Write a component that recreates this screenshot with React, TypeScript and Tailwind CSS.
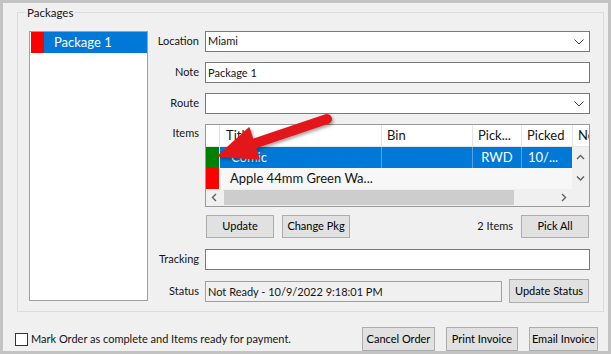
import React from 'react'

const Chevron = () => (
  <svg width="10" height="6" viewBox="0 0 10 6" className="shrink-0">
    <path d="M0.5 0.5 L5 5 L9.5 0.5" fill="none" stroke="#3c3c3c" strokeWidth="1" />
  </svg>
)

const SmallArrow = ({ dir }: { dir: 'up' | 'down' | 'left' | 'right' }) => {
  const d = {
    up: 'M1 5 L4.5 1.5 L8 5',
    down: 'M1 1.5 L4.5 5 L8 1.5',
    left: 'M5 1 L1.5 4.5 L5 8',
    right: 'M2 1 L5.5 4.5 L2 8',
  }[dir]
  const vertical = dir === 'up' || dir === 'down'
  return (
    <svg width={vertical ? 9 : 7} height={vertical ? 7 : 9} viewBox={vertical ? '0 0 9 7' : '0 0 7 9'}>
      <path d={d} fill="none" stroke="#606060" strokeWidth="1.4" />
    </svg>
  )
}

const Label = ({ children, className = '' }: { children: React.ReactNode; className?: string }) => (
  <div className={`w-[51px] shrink-0 text-right text-[11px] mr-[6px] ${className}`}>{children}</div>
)

const Button = ({ children, className = '' }: { children: React.ReactNode; className?: string }) => (
  <button className={`h-[23px] bg-[#e1e1e1] border border-[#adadad] text-[11px] text-black flex items-center justify-center ${className}`}>
    {children}
  </button>
)

const Combo = ({ value }: { value: string }) => (
  <div className="h-[21px] w-[385px] border border-[#7a7a7a] bg-white flex items-center pl-[2px] pr-[5px] text-[11px]">
    <span>{value}</span>
    <div className="ml-auto">
      <Chevron />
    </div>
  </div>
)

const ItemsGrid = () => (
  <div className="w-[385px] h-[83px] border border-[#9a9a9a] bg-white flex flex-col overflow-hidden text-[13px]">
    <div className="h-[22px] flex border-b border-[#e5e5e5] shrink-0">
      <div className="w-[14px] border-r border-[#e5e5e5]" />
      <div className="w-[162px] border-r border-[#e5e5e5] pl-[6px] leading-[21px]">Title</div>
      <div className="w-[91px] border-r border-[#e5e5e5] pl-[5px] leading-[21px]">Bin</div>
      <div className="w-[49px] border-r border-[#e5e5e5] pl-[5px] leading-[21px] whitespace-nowrap">Pick...</div>
      <div className="w-[51px] border-r border-[#e5e5e5] pl-[5px] leading-[21px]">Picked</div>
      <div className="w-[16px] pl-[5px] leading-[21px] overflow-hidden whitespace-nowrap">Ne</div>
    </div>
    <div className="flex h-[42px] shrink-0">
      <div className="flex flex-col w-[366px]">
        <div className="flex h-[21px] text-white">
          <div className="w-[13px] bg-[#008000]" />
          <div className="w-[1px] bg-[#f0f0f0]" />
          <div className="w-[162px] bg-[#0078d7] border-r border-[#5aa3e3] pl-[11px] leading-[20px]">Comic</div>
          <div className="w-[91px] bg-[#0078d7] border-r border-[#5aa3e3]" />
          <div className="w-[49px] bg-[#0078d7] border-r border-[#5aa3e3] text-center leading-[20px]">RWD</div>
          <div className="flex-1 bg-[#0078d7] pl-[6px] leading-[20px]">10/...</div>
        </div>
        <div className="flex h-[21px] bg-[#f7f7f7]">
          <div className="w-[13px] bg-[#ff0000]" />
          <div className="w-[1px] bg-white" />
          <div className="flex-1 pl-[10px] leading-[21px] whitespace-nowrap">Apple 44mm Green Wa...</div>
        </div>
      </div>
      <div className="flex-1 bg-[#f0f0f0] flex flex-col items-center">
        <div className="h-[21px] flex items-center">
          <SmallArrow dir="up" />
        </div>
        <div className="h-[21px] flex items-center">
          <SmallArrow dir="down" />
        </div>
      </div>
    </div>
    <div className="flex h-[17px] bg-[#f0f0f0] shrink-0">
      <div className="w-[17px] flex items-center justify-center">
        <SmallArrow dir="left" />
      </div>
      <div className="ml-[1px] my-[1px] w-[290px] bg-[#cdcdcd]" />
      <div className="ml-auto w-[17px] mr-[17px] flex items-center justify-center">
        <SmallArrow dir="right" />
      </div>
    </div>
  </div>
)

const PointerArrow = () => (
  <svg className="absolute left-[-3px] top-[-3px] pointer-events-none" width="611" height="354" viewBox="0 0 611 354">
    <defs>
      <filter id="sh" x="-20%" y="-20%" width="140%" height="140%">
        <feDropShadow dx="1.5" dy="2" stdDeviation="1.5" floodColor="#000" floodOpacity="0.35" />
      </filter>
    </defs>
    <g filter="url(#sh)">
      <line x1="327" y1="119" x2="250" y2="145" stroke="#e3161b" strokeWidth="10" strokeLinecap="round" />
      <polygon points="218,156 259,159 249,128" fill="#e3161b" stroke="#e3161b" strokeWidth="1.5" strokeLinejoin="round" />
    </g>
  </svg>
)

export default function App() {
  return (
    <div className="relative w-[611px] h-[354px] bg-[#f0f0f0] border-[3px] border-[#c3c3c3] text-[#141414] flex flex-col font-['Lato',sans-serif]">
      <div className="relative ml-[14px] mt-[9px] w-[587px] h-[300px] border border-[#dcdcdc] flex pl-[11px] pt-[18px]">
        <span className="absolute left-[7px] top-[-8px] px-[2px] bg-[#f0f0f0] text-[11.5px] leading-[16px]">Packages</span>

        <div className="w-[119px] h-[270px] border border-[#a0a0a0] bg-white shrink-0">
          <div className="flex h-[21px] text-white text-[13px]">
            <div className="w-[1px] bg-white" />
            <div className="w-[13px] bg-[#ff0000]" />
            <div className="flex-1 bg-[#0078d7] pl-[10px] leading-[21px]">Package 1</div>
          </div>
        </div>

        <div className="flex flex-col">
          <div className="flex items-center h-[21px]">
            <Label>Location</Label>
            <Combo value="Miami" />
          </div>
          <div className="flex items-center h-[21px] mt-[10px]">
            <Label>Note</Label>
            <div className="h-[21px] w-[385px] border border-[#7a7a7a] bg-white pl-[2px] text-[11px] leading-[19px]">Package 1</div>
          </div>
          <div className="flex items-center h-[21px] mt-[10px]">
            <Label>Route</Label>
            <Combo value="" />
          </div>
          <div className="flex items-start mt-[10px]">
            <Label className="leading-[18px]">Items</Label>
            <ItemsGrid />
          </div>
          <div className="flex items-center mt-[8px] pl-[58px]">
            <Button className="w-[68px]">Update</Button>
            <Button className="w-[68px] ml-[8px]">Change Pkg</Button>
            <span className="ml-auto mr-[8px] text-[11px]">2 Items</span>
            <Button className="w-[68px] mr-[1px]">Pick All</Button>
          </div>
          <div className="flex items-center h-[21px] mt-[11px]">
            <Label>Tracking</Label>
            <div className="h-[21px] w-[385px] border border-[#7a7a7a] bg-white" />
          </div>
          <div className="flex items-center h-[24px] mt-[9px]">
            <Label>Status</Label>
            <div className="h-[21px] w-[297px] border border-[#a0a0a0] bg-[#f0f0f0] pl-[2px] text-[11px] leading-[19px] whitespace-nowrap">
              Not Ready - 10/9/2022 9:18:01 PM
            </div>
            <Button className="w-[80px] h-[24px] ml-[7px]">Update Status</Button>
          </div>
        </div>
      </div>

      <div className="flex items-center h-[24px] mt-[15px]">
        <div className="ml-[12px] w-[13px] h-[13px] border border-[#333] bg-white" />
        <span className="ml-[3px] text-[11px]">Mark Order as complete and Items ready for payment.</span>
        <div className="ml-auto mr-[10px] flex gap-[11px]">
          <Button className="w-[73px] h-[24px]">Cancel Order</Button>
          <Button className="w-[72px] h-[24px]">Print Invoice</Button>
          <Button className="w-[69px] h-[24px]">Email Invoice</Button>
        </div>
      </div>

      <PointerArrow />
    </div>
  )
}
